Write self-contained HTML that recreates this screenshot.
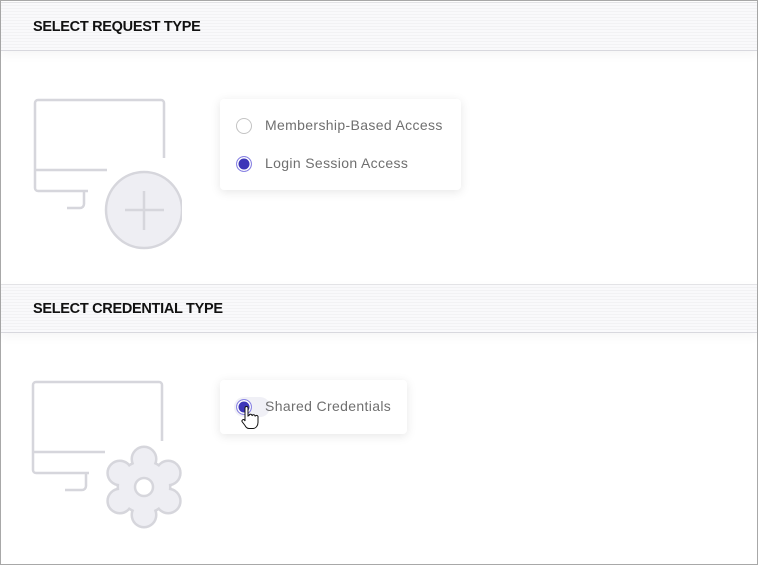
<!DOCTYPE html>
<html><head><style>
body{margin:0;width:758px;height:565px;overflow:hidden;background:#fff;font-family:"Liberation Sans",sans-serif;}
.frame{position:absolute;left:0;top:0;width:756px;height:563px;border:1px solid #a8a8a8;}
.band{position:absolute;left:1px;width:756px;height:47px;background:repeating-linear-gradient(#f9f9fb 0 2px,#f2f2f4 2px 3px);border-top:1px solid #e3e3e6;border-bottom:1px solid #d8d8de;box-shadow:0 4px 10px rgba(0,0,0,.04);}
.band span{position:absolute;left:32px;top:16px;font-size:14.5px;font-weight:bold;color:#111;letter-spacing:-.3px;}
.card{position:absolute;background:#fff;border-radius:4px;box-shadow:0 2px 10px rgba(0,0,0,.1);}
.opt{position:absolute;left:16px;font-size:14px;color:#6f6f6f;}
.r{position:absolute;left:0;top:-1px;width:16px;height:16px;border-radius:50%;box-sizing:border-box;}
.off{border:1px solid #c4c4c4;background:#fff}
.on{border:1px solid #8a84e4;background:#3d36b8;box-shadow:inset 0 0 0 1.5px #fff;}
.opt b{font-weight:normal;position:absolute;left:29px;top:-2px;white-space:nowrap;letter-spacing:.35px;}
</style></head><body>
<div class="frame"></div>
<div class="band" style="top:2px"><span>SELECT REQUEST TYPE</span></div>
<div class="band" style="top:284px"><span>SELECT CREDENTIAL TYPE</span></div>
<svg style="position:absolute;left:0;top:0" width="758" height="565">
<defs><clipPath id="c"><rect x="0" y="0" width="182" height="565"/></clipPath></defs>
<g fill="none" stroke="#d6d6dc" stroke-width="2.5">
<path d="M164 158V103a3 3 0 0 0-3-3H38a3 3 0 0 0-3 3v85a3 3 0 0 0 3 3h50M35 170h72M84 191v13a4 4 0 0 1-4 4H67"/>
<path d="M162 160V104a3 3 0 0 0-3-3H36a3 3 0 0 0-3 3v85a3 3 0 0 0 3 3h53" transform="translate(0,281)"/>
<path d="M33 452h72M86 473v13a4 4 0 0 1-4 4H65"/>
</g>
<circle cx="144" cy="210" r="38" fill="#eeeef3" stroke="#d6d6dc" stroke-width="2.5" clip-path="url(#c)"/>
<path d="M144 191v39M125 210h39" stroke="#d6d6dc" stroke-width="2.5"/>
<g stroke="#d6d6dc" stroke-width="5" fill="#d6d6dc">
<circle cx="144" cy="487" r="25"/>
<circle cx="144" cy="459" r="11"/><circle cx="168.2" cy="473" r="11"/><circle cx="168.2" cy="501" r="11"/>
<circle cx="144" cy="515" r="11"/><circle cx="119.8" cy="501" r="11"/><circle cx="119.8" cy="473" r="11"/>
</g>
<g fill="#eeeef3">
<circle cx="144" cy="487" r="25"/>
<circle cx="144" cy="459" r="11"/><circle cx="168.2" cy="473" r="11"/><circle cx="168.2" cy="501" r="11"/>
<circle cx="144" cy="515" r="11"/><circle cx="119.8" cy="501" r="11"/><circle cx="119.8" cy="473" r="11"/>
</g>
<circle cx="144" cy="487" r="9" fill="#fff" stroke="#d6d6dc" stroke-width="2.5"/>
</svg>
<div class="card" style="left:220px;top:99px;width:241px;height:91px">
<div class="opt" style="top:20px"><div class="r off"></div><b>Membership-Based Access</b></div>
<div class="opt" style="top:58px"><div class="r on"></div><b>Login Session Access</b></div>
</div>
<div class="card" style="left:220px;top:380px;width:187px;height:54px">
<div style="position:absolute;left:14px;top:17px;width:36px;height:20px;border-radius:10px;background:#f0f0f6"></div>
<div class="opt" style="top:20px"><div class="r on"></div><b>Shared Credentials</b></div>
</div>
<svg style="position:absolute;left:240px;top:406px" width="20" height="24"><path d="M5 2a1.5 1.5 0 0 1 3 0v8l1-.5a1.5 1.5 0 0 1 3 .5 1.5 1.5 0 0 1 3 .5 1.5 1.5 0 0 1 3 1v5c0 3-2 6-5 6H9c-2 0-3-1-4-3l-3-4a1.5 1.5 0 0 1 2.5-1.5L5 15z" fill="#fff" stroke="#111" stroke-width="1"/></svg>
</body></html>
